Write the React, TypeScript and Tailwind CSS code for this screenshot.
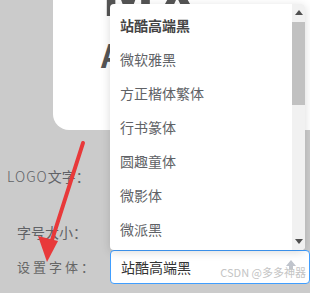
import React from 'react';

const fonts = [
  { name: '站酷高端黑', active: true },
  { name: '微软雅黑' },
  { name: '方正楷体繁体' },
  { name: '行书篆体' },
  { name: '圆趣童体' },
  { name: '微影体' },
  { name: '微派黑' },
];

const cjk = { fontFamily: '"Noto Sans CJK SC", "Noto Sans", sans-serif' };

export default function App() {
  return (
    <div className="relative w-[310px] h-[293px] overflow-hidden bg-[#cbcbcb]" style={cjk}>
      {/* logo preview card */}
      <div className="ml-[53px] h-[130px] bg-white rounded-bl-[16px] overflow-hidden relative">
        <div className="absolute left-[48px] top-[-44px] text-[64px] font-bold leading-none text-[#555] tracking-[2px]">
          MX
        </div>
        <div className="absolute left-[48px] top-[38px] text-[32px] font-bold leading-none text-[#555]">
          A
        </div>
      </div>

      {/* form rows */}
      <div className="flex flex-col text-[14px] text-[#606266]">
        <div className="h-[34px] mt-[29px] flex items-center pl-[7px]">
          <span className="tracking-[1px] font-light">LOGO</span>文字：
        </div>
        <div className="h-[34px] mt-[22px] flex items-center pl-[17px]">字号大小：</div>
        <div className="h-[34px] mt-[1px] flex items-center">
          <div className="w-[110px] pl-[17px] text-[13px] tracking-[3px] text-[#666]">设置字体：</div>
          <div className="flex-1 h-[34px] bg-white border border-[#409eff] rounded-[4px] flex items-center pl-[10px] pr-[10px] relative">
            <span className="text-[14px] text-[#333]">站酷高端黑</span>
            <svg className="absolute right-[12px] top-[8px]" width="12" height="10" viewBox="0 0 12 10">
              <path d="M6 1 L11 7 H8 V10 H4 V7 H1 Z" fill="#c0c4cc" />
            </svg>
            <span className="absolute right-[3px] bottom-[5px] text-[11px] text-[#c4c4c4] leading-none">
              CSDN @多多神器
            </span>
          </div>
        </div>
      </div>

      {/* dropdown popover */}
      <div className="absolute left-[110px] top-[4px] w-[195px] h-[246px] bg-white rounded-[4px] shadow-[0_2px_10px_rgba(0,0,0,0.15)] flex overflow-hidden">
        <ul className="flex-1 pt-[4px]">
          {fonts.map((f) => (
            <li
              key={f.name}
              className={`h-[34px] px-[10px] flex items-center text-[14px] ${
                f.active ? 'text-[#444] font-bold' : 'text-[#606266]'
              }`}
            >
              {f.name}
            </li>
          ))}
        </ul>
        <div className="w-[13px] bg-[#f1f1f1] flex flex-col items-center">
          <svg className="mt-[6px]" width="8" height="5" viewBox="0 0 8 5">
            <path d="M4 0 L8 5 H0 Z" fill="#505050" />
          </svg>
          <div className="w-[13px] h-[83px] mt-[7px] bg-[#c1c1c1]" />
          <div className="flex-1" />
          <svg className="mb-[6px]" width="8" height="5" viewBox="0 0 8 5">
            <path d="M0 0 H8 L4 5 Z" fill="#505050" />
          </svg>
        </div>
      </div>

      {/* red annotation arrow */}
      <svg className="absolute left-0 top-0 pointer-events-none" width="310" height="293" viewBox="0 0 310 293">
        <line x1="83" y1="143" x2="52" y2="240" stroke="#e8393a" strokeWidth="4" strokeLinecap="round" />
        <path d="M47 262 L38 236 L58 241 Z" fill="#e8393a" />
      </svg>
    </div>
  );
}
